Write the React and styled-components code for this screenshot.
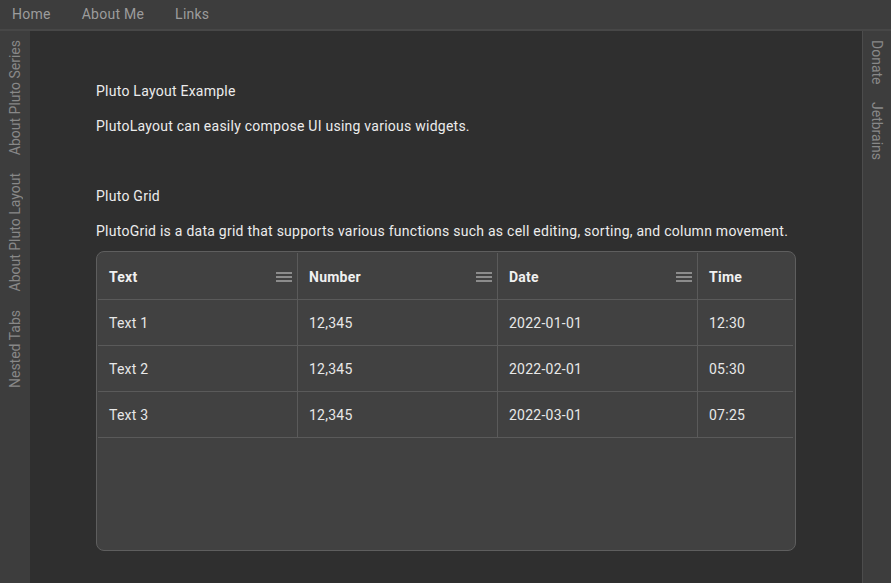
import styled, { createGlobalStyle } from "styled-components";

const GlobalStyle = createGlobalStyle`
    html, body {
        margin: 0;
        padding: 0;
        background-color: #2f2f2f;
        font-family: Roboto, "Liberation Sans", sans-serif;
        letter-spacing: 0.25px;
    }
    * {
        box-sizing: border-box;
    }
`

const columns = [
    { title: "Text", key: "text", width: 200 },
    { title: "Number", key: "number", width: 200 },
    { title: "Date", key: "date", width: 200 },
    { title: "Time", key: "time", width: 95, noMenu: true },
];

const rows = [
    { text: "Text 1", number: "12,345", date: "2022-01-01", time: "12:30" },
    { text: "Text 2", number: "12,345", date: "2022-02-01", time: "05:30" },
    { text: "Text 3", number: "12,345", date: "2022-03-01", time: "07:25" },
];

function MenuIcon() {
    return (
        <svg width="16" height="12" viewBox="0 0 16 12">
            <rect x="0" y="1" width="16" height="2" fill="#8c8c8c" />
            <rect x="0" y="5" width="16" height="2" fill="#8c8c8c" />
            <rect x="0" y="9" width="16" height="2" fill="#8c8c8c" />
        </svg>
    )
}

export default function App() {
    return (
        <Page>
            <GlobalStyle />
            <TopBar>
                <NavItem>Home</NavItem>
                <NavItem>About Me</NavItem>
                <NavItem>Links</NavItem>
            </TopBar>

            <Body>
                <SideBar>
                    <SideTab>About Pluto Series</SideTab>
                    <SideTab>About Pluto Layout</SideTab>
                    <SideTab>Nested Tabs</SideTab>
                </SideBar>

                <Main>
                    <Title>Pluto Layout Example</Title>
                    <Paragraph>PlutoLayout can easily compose UI using various widgets.</Paragraph>

                    <Title $top={50}>Pluto Grid</Title>
                    <Paragraph>PlutoGrid is a data grid that supports various functions such as cell editing, sorting, and column movement.</Paragraph>

                    <Grid>
                        <HeaderRow>
                            {columns.map((c, i) =>
                                <HeaderCell key={c.key} $width={c.width} $last={i === columns.length - 1}>
                                    <span>{c.title}</span>
                                    {!c.noMenu && <MenuIcon />}
                                </HeaderCell>
                            )}
                        </HeaderRow>
                        {rows.map((r, idx) =>
                            <Row key={idx}>
                                {columns.map((c, i) =>
                                    <Cell key={c.key} $width={c.width} $last={i === columns.length - 1}>
                                        {r[c.key]}
                                    </Cell>
                                )}
                            </Row>
                        )}
                    </Grid>
                </Main>

                <RightBar>
                    <RightTab>Donate</RightTab>
                    <RightTab>Jetbrains</RightTab>
                </RightBar>
            </Body>
        </Page>
    )
}

const Page = styled.div`
    width: 100%;
    height: 100vh;
    display: flex;
    flex-direction: column;
    background-color: #2f2f2f;
    overflow: hidden;
`

const TopBar = styled.div`
    height: 31px;
    flex-shrink: 0;
    display: flex;
    align-items: flex-start;
    gap: 31px;
    padding: 4px 0 0 12px;
    background-color: #3d3d3d;
    border-bottom: 2px solid #474747;
`

const NavItem = styled.div`
    font-size: 14px;
    line-height: 20px;
    color: #9c9c9c;
`

const Body = styled.div`
    flex: 1;
    display: flex;
    min-height: 0;
`

const SideBar = styled.div`
    width: 30px;
    flex-shrink: 0;
    background-color: #3d3d3d;
    display: flex;
    flex-direction: column;
    align-items: center;
`

const SideTab = styled.div`
    writing-mode: vertical-rl;
    transform: rotate(180deg);
    font-size: 14px;
    line-height: 20px;
    letter-spacing: 0;
    color: #888888;
    padding: 9px 0;
`

const RightBar = styled.div`
    width: 29px;
    flex-shrink: 0;
    background-color: #3d3d3d;
    border-left: 1px solid #4c4c4c;
    display: flex;
    flex-direction: column;
    align-items: center;
`

const RightTab = styled.div`
    writing-mode: vertical-rl;
    font-size: 14px;
    line-height: 20px;
    letter-spacing: 0;
    color: #888888;
    padding: 9px 0 8px;
`

const Main = styled.div`
    flex: 1;
    padding: 50px 66px 0 66px;
    display: flex;
    flex-direction: column;
    align-items: flex-start;
`

const Title = styled.div`
    font-size: 14px;
    line-height: 20px;
    color: #ececec;
    margin-top: ${p => p.$top || 0}px;
`

const Paragraph = styled.div`
    font-size: 14px;
    line-height: 20px;
    color: #ececec;
    margin-top: 15px;
`

const Grid = styled.div`
    margin-top: 10px;
    width: 700px;
    height: 300px;
    background-color: #414141;
    border: 1px solid #5e5e5e;
    border-radius: 8px;
    padding: 1px 2px 0 1px;
    overflow: hidden;
`

const HeaderRow = styled.div`
    display: flex;
    height: 47px;
    border-bottom: 1px solid #5a5a5a;
`

const HeaderCell = styled.div`
    width: ${p => p.$width}px;
    flex-shrink: 0;
    display: flex;
    align-items: center;
    justify-content: space-between;
    padding: 2px 5px 0 11px;
    border-right: ${p => p.$last ? "none" : "1px solid #5a5a5a"};
    span {
        font-size: 14px;
        font-weight: 700;
        color: #f0f0f0;
    }
`

const Row = styled.div`
    display: flex;
    height: 46px;
    border-bottom: 1px solid #5a5a5a;
`

const Cell = styled.div`
    width: ${p => p.$width}px;
    flex-shrink: 0;
    display: flex;
    align-items: center;
    padding: 0 11px;
    font-size: 14px;
    color: #e8e8e8;
    border-right: ${p => p.$last ? "none" : "1px solid #5a5a5a"};
`
